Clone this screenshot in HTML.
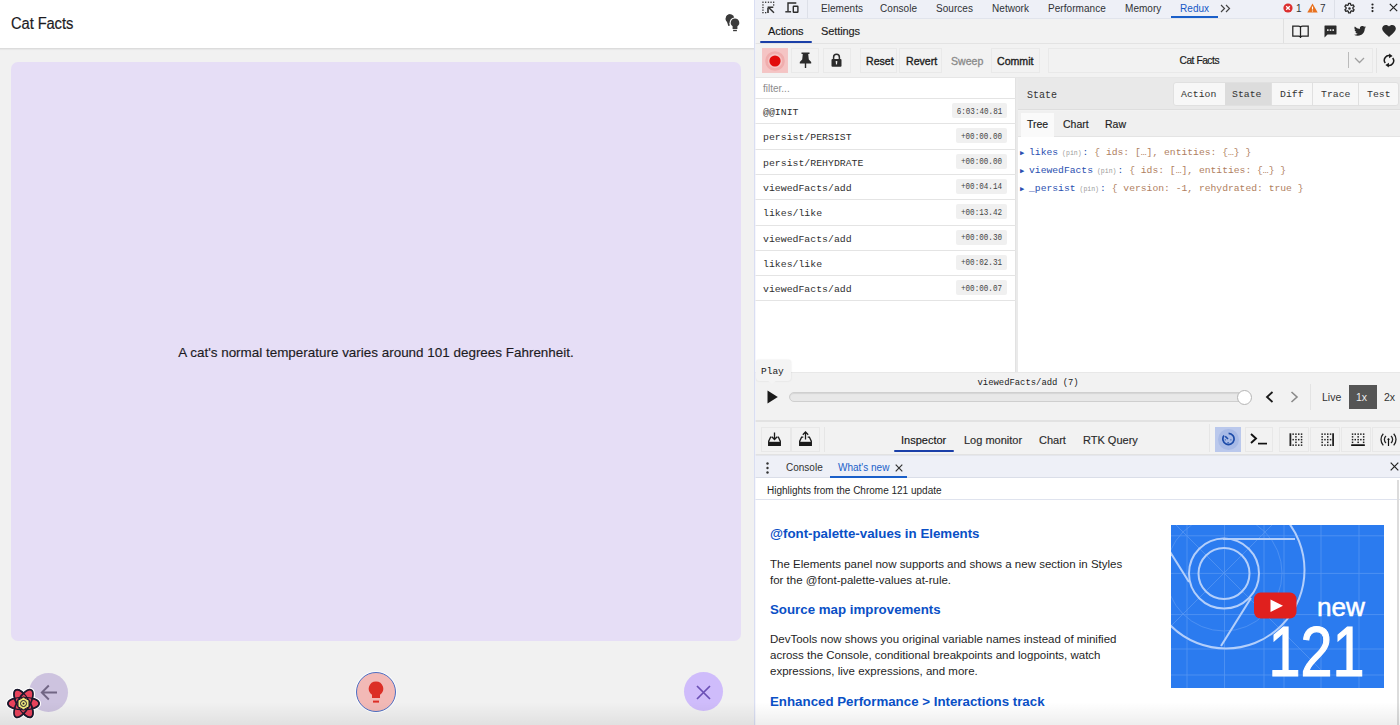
<!DOCTYPE html>
<html><head><meta charset="utf-8">
<style>
*{margin:0;padding:0;box-sizing:border-box}
html,body{width:1400px;height:725px;overflow:hidden;background:#fff;font-family:"Liberation Sans",sans-serif;color:#202124}
.a{position:absolute}
.mono{font-family:"Liberation Mono",monospace}
/* app */
#app{left:0;top:0;width:754px;height:725px;background:#f1f1f1}
#hdr{left:0;top:0;width:754px;height:49px;background:#fff;border-bottom:1px solid #dcdcdc;box-shadow:0 1px 1px rgba(0,0,0,.04)}
#card{left:11px;top:62px;width:730px;height:579px;background:#e6def6;border-radius:7px}
/* devtools */
#dt{left:755px;top:0;width:645px;height:725px;background:#fff}
.txt{white-space:nowrap;line-height:1}
.tb{top:3.8px;font-size:10px;color:#303236;letter-spacing:0.05px}
.btn{top:48px;height:25px;border:1px solid #e9e9e9;background:#f2f2f2}
.bt{top:56px;font-size:10.6px;color:#1e1e1e;-webkit-text-stroke:0.35px #1e1e1e;letter-spacing:0px}
.an{font-size:9.85px;color:#303030}
.tbadge{height:15px;background:#f0f0f0;border-radius:2px}
.tm{font-size:7.6px;color:#444;text-align:center;transform:scaleY(1.3);transform-origin:50% 30%}
.st{top:90px;font-size:9.8px;color:#333}
.tt{top:119px;font-size:10.5px;color:#222;-webkit-text-stroke:0.15px #222}
.tree{white-space:nowrap;font-size:9.7px;line-height:12px}
.tree .ar{font-size:7px;color:#2a4fb0;display:inline-block;width:9px;vertical-align:0px}
.tree .k{color:#2a4fb0}
.tree .pin{font-size:6.5px;color:#999;margin:0 1px 0 4px}
.tree .v{color:#b08060}
.btn2{top:427px;height:25px;border:1px solid #e8e8e8;background:#f2f2f2}
.it{top:434.5px;font-size:11px;color:#2a2a2a;-webkit-text-stroke:0.15px #2a2a2a}
.dr{top:463px;font-size:10px;color:#333}
.h2{font-size:13.3px;font-weight:bold;color:#0a50c6}
.p{font-size:11.5px;line-height:16.2px;color:#1f1f1f;white-space:nowrap}
.rs{font-size:11px;letter-spacing:-0.1px;-webkit-text-stroke:0.15px #222}
</style></head><body>
<div id="app" class="a">
  <div id="hdr" class="a">
    <div class="a txt" style="left:11px;top:16px;font-size:16px;letter-spacing:-0.1px;color:#1c1b1f;-webkit-text-stroke:0.2px #1c1b1f;transform:scaleX(0.92);transform-origin:0 0">Cat Facts</div>
  </div>
  <div id="card" class="a">
    <div class="a txt" style="left:0;width:730px;top:283.5px;text-align:center;font-size:13.45px;color:#1c1b1f;-webkit-text-stroke:0.15px #1c1b1f">A cat's normal temperature varies around 101 degrees Fahrenheit.</div>
  </div>
  <!-- buttons -->
  <div class="a" style="left:29px;top:673px;width:39px;height:39px;border-radius:50%;background:#cdc3df"></div>
  <svg class="a" style="left:39.5px;top:684px" width="18" height="17" viewBox="0 0 18 17"><path d="M17 8.5H2.2M8.8 1.5L1.8 8.5l7 7" stroke="#716684" stroke-width="1.9" fill="none"/></svg>
  <div class="a" style="left:356px;top:672px;width:40px;height:40px;border-radius:50%;background:#f2b9b6;border:1.6px solid #4d6ec2;box-shadow:0 0 0 1px rgba(255,255,255,.7)"></div>
  <svg class="a" style="left:368px;top:681px" width="16" height="23" viewBox="0 0 16 23"><path d="M8 0.5a7.2 7.2 0 0 0-4 13.2v3.3h8v-3.3A7.2 7.2 0 0 0 8 0.5z" fill="#dc2e26"/><rect x="5" y="19.6" width="6" height="2" fill="#dc2e26"/></svg>
  <div class="a" style="left:684px;top:672px;width:39px;height:39px;border-radius:50%;background:#cfbcfb"></div>
  <svg class="a" style="left:696px;top:685px" width="15" height="15" viewBox="0 0 15 15"><path d="M1 1l13 13M14 1L1 14" stroke="#6a4fb5" stroke-width="1.7"/></svg>
  <!-- header icon -->
  <svg class="a" style="left:724px;top:13px" width="18" height="20" viewBox="0 0 18 20">
    <path d="M6 1.3a4.3 4.3 0 0 0-3 7.4l1.3 4.3 1.6-.4-.6-3.8A4.3 4.3 0 0 0 6 1.3z" fill="#3a3a3a"/>
    <circle cx="6" cy="5.6" r="4.3" fill="#3a3a3a"/>
    <g stroke="#fff" stroke-width="2.2" fill="#3a3a3a" stroke-linejoin="round">
      <path d="M11 5.6a4.2 4.2 0 0 0-2.4 7.7v2.8h4.8v-2.8A4.2 4.2 0 0 0 11 5.6z"/>
    </g>
    <path d="M11 5.6a4.2 4.2 0 0 0-2.4 7.7v2.8h4.8v-2.8A4.2 4.2 0 0 0 11 5.6z" fill="#3a3a3a"/>
    <rect x="9.1" y="16.8" width="3.8" height="1.4" fill="#3a3a3a"/>
  </svg>
  <!-- react logo -->
  <svg class="a" style="left:5px;top:686px" width="37" height="35" viewBox="0 0 37 35">
    <g transform="translate(18.5 17.5)">
      <g stroke="#fff" stroke-width="4" fill="#fff"><ellipse rx="15.6" ry="6.3"/><ellipse rx="15.6" ry="6.3" transform="rotate(60)"/><ellipse rx="15.6" ry="6.3" transform="rotate(120)"/></g>
      <g stroke="#1c1a2e" stroke-width="1.7" fill="#e8435b"><ellipse rx="15.6" ry="6.3"/><ellipse rx="15.6" ry="6.3" transform="rotate(60)"/><ellipse rx="15.6" ry="6.3" transform="rotate(120)"/></g>
      <g stroke="#1c1a2e" stroke-width="1.1" fill="none"><ellipse rx="15.6" ry="6.3"/><ellipse rx="15.6" ry="6.3" transform="rotate(60)"/></g>
      <path d="M0-6.3L5.5-3.15V3.15L0 6.3-5.5 3.15V-3.15z" fill="#efe97c" stroke="#1c1a2e" stroke-width="1"/>
      <circle r="3" fill="#efe97c" stroke="#1c1a2e" stroke-width="1"/><circle r="1" fill="#1c1a2e"/>
    </g>
  </svg>
</div>
<div id="dt" class="a">
  <!-- top tab bar -->
  <div class="a" style="left:0;top:0;width:646px;height:19px;background:#eef0f7;border-bottom:1px solid #e1e4ec"></div>
  <svg class="a" style="left:6.5px;top:1px" width="13" height="13" viewBox="0 0 13 13">
    <g fill="#333"><rect x="0.3" y="0.6" width="1.3" height="1.3"/><rect x="3" y="0.6" width="1.3" height="1.3"/><rect x="5.8" y="0.6" width="1.3" height="1.3"/><rect x="8.4" y="0.6" width="1.3" height="1.3"/><rect x="11" y="0.6" width="1.3" height="1.3"/><rect x="0.3" y="3.3" width="1.3" height="1.3"/><rect x="0.3" y="5.9" width="1.3" height="1.3"/><rect x="0.3" y="8.5" width="1.3" height="1.3"/><rect x="0.3" y="11" width="1.3" height="1.3"/><rect x="3" y="11" width="1.3" height="1.3"/><rect x="11" y="3.3" width="1.3" height="1.3"/></g>
    <path d="M6.3 6.3L12 11.8" stroke="#333" stroke-width="1.5"/><path d="M6 6.9V12M5.6 6.3H11.3" stroke="#333" stroke-width="1.6"/>
  </svg>
  <svg class="a" style="left:29.5px;top:2px" width="14" height="11" viewBox="0 0 14 11"><path d="M3 9.3V1h8.3" stroke="#2b2b2b" stroke-width="1.4" fill="none"/><path d="M0.3 9.8h5.8" stroke="#2b2b2b" stroke-width="1.4"/><rect x="8.3" y="4.3" width="4.6" height="6" rx="0.5" stroke="#2b2b2b" stroke-width="1.4" fill="none"/></svg>
  <div class="a" style="left:52px;top:0;width:1px;height:18px;background:#dde0e8"></div>
  <div class="a txt tb" style="left:66px">Elements</div>
  <div class="a txt tb" style="left:125px">Console</div>
  <div class="a txt tb" style="left:181px">Sources</div>
  <div class="a txt tb" style="left:237px">Network</div>
  <div class="a txt tb" style="left:293px">Performance</div>
  <div class="a txt tb" style="left:370px">Memory</div>
  <div class="a txt tb" style="left:425px;color:#1658c6">Redux</div>
  <div class="a" style="left:416px;top:16px;width:47px;height:2px;background:#1a5fc9"></div>
  <svg class="a" style="left:465px;top:4px" width="11" height="9" viewBox="0 0 11 9"><path d="M1 1l3.5 3.5L1 8M6 1l3.5 3.5L6 8" stroke="#444" stroke-width="1.2" fill="none"/></svg>
  <svg class="a" style="left:528px;top:3px" width="10" height="10" viewBox="0 0 10 10"><circle cx="5" cy="5" r="4.6" fill="#dc2f2f"/><path d="M3.2 3.2l3.6 3.6M6.8 3.2l-3.6 3.6" stroke="#fff" stroke-width="1.3"/></svg>
  <div class="a txt tb" style="left:541px;top:4px;font-size:10px">1</div>
  <svg class="a" style="left:552px;top:3px" width="11" height="10" viewBox="0 0 11 10"><path d="M5.5 0.5L10.7 9.5H0.3z" fill="#e8711f"/><path d="M5.5 3.5v3M5.5 7.5v1" stroke="#fff" stroke-width="1.1"/></svg>
  <div class="a txt tb" style="left:565px;top:4px;font-size:10px">7</div>
  <div class="a" style="left:579px;top:0;width:1px;height:18px;background:#dde0e8"></div>
  <svg class="a" style="left:587.5px;top:1.5px" width="13" height="13" viewBox="0 0 24 24"><path fill="none" stroke="#2b2b2b" stroke-width="2.4" stroke-linejoin="round" d="M10.3 2.5h3.4l.5 2.8 1.9 1.1 2.7-1 1.7 2.9-2.2 1.9v2.2l2.2 1.9-1.7 2.9-2.7-1-1.9 1.1-.5 2.8h-3.4l-.5-2.8-1.9-1.1-2.7 1-1.7-2.9 2.2-1.9v-2.2L3.5 8.3l1.7-2.9 2.7 1 1.9-1.1z"/><circle cx="12" cy="12" r="2.3" fill="#2b2b2b"/></svg>
  <svg class="a" style="left:615.5px;top:3px" width="3" height="10" viewBox="0 0 3 10"><circle cx="1.5" cy="1.5" r="1.1" fill="#222"/><circle cx="1.5" cy="4.8" r="1.1" fill="#222"/><circle cx="1.5" cy="8.1" r="1.1" fill="#222"/></svg>
  <svg class="a" style="left:634px;top:3px" width="9" height="9" viewBox="0 0 9 9"><path d="M0.8 0.8l7.4 7.4M8.2 0.8l-7.4 7.4" stroke="#222" stroke-width="1.2"/></svg>

  <!-- redux panel bg -->
  <div class="a" style="left:0;top:19px;width:646px;height:437px;background:#f2f2f2"></div>
  <!-- actions/settings row -->
  <div class="a" style="left:0;top:43px;width:646px;height:1px;background:#e3e3e3"></div>
  <div class="a txt rs" style="left:13px;top:26px;color:#111">Actions</div>
  <div class="a txt rs" style="left:66px;top:26px;color:#222">Settings</div>
  <div class="a" style="left:5px;top:41px;width:52px;height:2px;background:#1a3fa8;border-radius:1px"></div>
  <div class="a" style="left:528px;top:19px;width:1px;height:24px;background:#e0e0e0"></div>

  <!-- toolbar -->
  <div class="a" style="left:0;top:77px;width:646px;height:1px;background:#e6e6e6"></div>
  <div class="a btn" style="left:7px;width:26px;background:#f5c4c4;border-color:#f3c6c6"></div>
  <svg class="a" style="left:9px;top:50px" width="22" height="22" viewBox="0 0 22 22"><circle cx="11" cy="11" r="9.8" fill="#f0adad"/><circle cx="11" cy="11" r="7.2" fill="#f5c4c4"/><circle cx="11" cy="11" r="5.6" fill="#e20b0b"/></svg>
  <div class="a btn" style="left:36px;width:28px"></div>
  <svg class="a" style="left:44px;top:52px" width="13" height="16" viewBox="0 0 13 16"><path d="M2.5 0.5h8v1.6H9.2l0.6 5.4 2.4 2.4v1.5H7.2v5.1h-1.4v-5.1H0.8V9.9l2.4-2.4 0.6-5.4H2.5z" fill="#2b2b2b"/></svg>
  <div class="a btn" style="left:68px;width:28px"></div>
  <svg class="a" style="left:76px;top:53px" width="11" height="14" viewBox="0 0 11 14"><path d="M2.6 6V4.2a2.9 2.9 0 0 1 5.8 0V6" stroke="#2b2b2b" stroke-width="1.5" fill="none"/><rect x="0.5" y="6" width="10" height="7.8" rx="1" fill="#2b2b2b"/><path d="M5.5 8.6v2.8" stroke="#f2f2f2" stroke-width="1.2"/><circle cx="5.5" cy="8.8" r="0.9" fill="#f2f2f2"/></svg>
  <div class="a btn" style="left:105px;width:37px"></div>
  <div class="a btn" style="left:144px;width:43px"></div>
  <div class="a btn" style="left:236px;width:49px"></div>
  <div class="a txt bt" style="left:111px">Reset</div>
  <div class="a txt bt" style="left:151px">Revert</div>
  <div class="a txt bt" style="left:196px;color:#8a8a8a;-webkit-text-stroke:0.3px #8a8a8a">Sweep</div>
  <div class="a txt bt" style="left:242px">Commit</div>
  <!-- instance select -->
  <div class="a btn" style="left:293px;width:325px"></div>
  <div class="a txt bt" style="left:424.5px;font-size:10.2px;letter-spacing:-0.45px;color:#1a1a1a;-webkit-text-stroke:0.2px #1a1a1a">Cat Facts</div>
  <div class="a" style="left:593px;top:52px;width:1px;height:16px;background:#bbb"></div>
  <svg class="a" style="left:599px;top:57px" width="11" height="7" viewBox="0 0 11 7"><path d="M1 1l4.5 4.5L10 1" stroke="#a0a0a0" stroke-width="1.3" fill="none"/></svg>
  <div class="a" style="left:621px;top:48px;width:1px;height:25px;background:#e3e3e3"></div>
  <svg class="a" style="left:627.5px;top:53px" width="12" height="15" viewBox="0 0 12 15"><path d="M2.3 10A4.6 4.6 0 0 1 7.6 2.9" stroke="#1a1a1a" stroke-width="1.5" fill="none"/><path d="M9.7 5A4.6 4.6 0 0 1 4.4 12.1" stroke="#1a1a1a" stroke-width="1.5" fill="none"/><path d="M6.2 0.5L9.6 3 6 5.2z" fill="#1a1a1a"/><path d="M5.8 14.5L2.4 12 6 9.8z" fill="#1a1a1a"/></svg>
  <!-- right icons row -->
  <svg class="a" style="left:537px;top:24.5px" width="17" height="13" viewBox="0 0 17 13"><path d="M0.8 1h5.6c1 0 2.1.6 2.1 1.6V12c-.3-.5-1-.9-2-.9H0.8zM16.2 1h-5.6c-1 0-2.1.6-2.1 1.6V12c.3-.5 1-.9 2-.9h5.7z" stroke="#222" stroke-width="1.25" fill="none"/></svg>
  <svg class="a" style="left:569px;top:25px" width="13" height="13" viewBox="0 0 13 13"><path d="M1 0.5h11c.3 0 .5.2.5.5v8c0 .3-.2.5-.5.5H3.5L0.5 12.5V1c0-.3.2-.5.5-.5z" fill="#2b2b2b"/><rect x="3" y="4.3" width="1.6" height="1.6" fill="#f2f2f2"/><rect x="5.7" y="4.3" width="1.6" height="1.6" fill="#f2f2f2"/><rect x="8.4" y="4.3" width="1.6" height="1.6" fill="#f2f2f2"/></svg>
  <svg class="a" style="left:599px;top:26px" width="12" height="10" viewBox="0 0 24 20"><path fill="#2b2b2b" d="M24 2.4a9.8 9.8 0 0 1-2.8.8A4.9 4.9 0 0 0 23.3.4a9.9 9.9 0 0 1-3.1 1.2A4.9 4.9 0 0 0 11.8 6 14 14 0 0 1 1.7.9a4.9 4.9 0 0 0 1.5 6.6A4.9 4.9 0 0 1 1 6.9v.1a4.9 4.9 0 0 0 3.9 4.8 4.9 4.9 0 0 1-2.2.1 4.9 4.9 0 0 0 4.6 3.4A9.9 9.9 0 0 1 0 17.3 14 14 0 0 0 7.5 19.5c9.1 0 14-7.5 14-14v-.6A10 10 0 0 0 24 2.4z"/></svg>
  <svg class="a" style="left:627px;top:25px" width="14" height="12" viewBox="0 0 24 21"><path fill="#2b2b2b" d="M12 21l-1.7-1.6C4.2 13.9 0 10.1 0 6.5 0 2.9 2.9 0 6.5 0 8.6 0 10.6 1 12 2.5 13.4 1 15.4 0 17.5 0 21.1 0 24 2.9 24 6.5c0 3.6-4.2 7.4-10.3 12.9z"/></svg>

  <!-- action list -->
  <div class="a" style="left:0;top:78px;width:261px;height:294px;background:#fff;border-right:1px solid #e2e2e2"></div>
  <div class="a" style="left:261px;top:78px;width:2px;height:294px;background:#eaeaea"></div>
  <div class="a txt" style="left:8px;top:84px;font-size:10px;color:#8c8c8c">filter...</div>
  <div class="a" style="left:0;top:98.0px;width:261px;height:1px;background:#e4e4e4"></div>
  <div class="a txt mono an" style="left:8px;top:108.0px">@@INIT</div>
  <div class="a tbadge" style="left:197px;top:103.0px;width:55px"></div>
  <div class="a txt mono tm" style="left:197px;width:55px;top:107.5px">6:03:40.81</div>
  <div class="a" style="left:0;top:123.3px;width:261px;height:1px;background:#e4e4e4"></div>
  <div class="a txt mono an" style="left:8px;top:133.3px">persist/PERSIST</div>
  <div class="a tbadge" style="left:201px;top:128.3px;width:51px"></div>
  <div class="a txt mono tm" style="left:201px;width:51px;top:132.8px">+00:00.00</div>
  <div class="a" style="left:0;top:148.6px;width:261px;height:1px;background:#e4e4e4"></div>
  <div class="a txt mono an" style="left:8px;top:158.6px">persist/REHYDRATE</div>
  <div class="a tbadge" style="left:201px;top:153.6px;width:51px"></div>
  <div class="a txt mono tm" style="left:201px;width:51px;top:158.1px">+00:00.00</div>
  <div class="a" style="left:0;top:173.9px;width:261px;height:1px;background:#e4e4e4"></div>
  <div class="a txt mono an" style="left:8px;top:183.9px">viewedFacts/add</div>
  <div class="a tbadge" style="left:201px;top:178.9px;width:51px"></div>
  <div class="a txt mono tm" style="left:201px;width:51px;top:183.4px">+00:04.14</div>
  <div class="a" style="left:0;top:199.2px;width:261px;height:1px;background:#e4e4e4"></div>
  <div class="a txt mono an" style="left:8px;top:209.2px">likes/like</div>
  <div class="a tbadge" style="left:201px;top:204.2px;width:51px"></div>
  <div class="a txt mono tm" style="left:201px;width:51px;top:208.7px">+00:13.42</div>
  <div class="a" style="left:0;top:224.5px;width:261px;height:1px;background:#e4e4e4"></div>
  <div class="a txt mono an" style="left:8px;top:234.5px">viewedFacts/add</div>
  <div class="a tbadge" style="left:201px;top:229.5px;width:51px"></div>
  <div class="a txt mono tm" style="left:201px;width:51px;top:234.0px">+00:00.30</div>
  <div class="a" style="left:0;top:249.8px;width:261px;height:1px;background:#e4e4e4"></div>
  <div class="a txt mono an" style="left:8px;top:259.8px">likes/like</div>
  <div class="a tbadge" style="left:201px;top:254.8px;width:51px"></div>
  <div class="a txt mono tm" style="left:201px;width:51px;top:259.3px">+00:02.31</div>
  <div class="a" style="left:0;top:275.1px;width:261px;height:1px;background:#e4e4e4"></div>
  <div class="a txt mono an" style="left:8px;top:285.1px">viewedFacts/add</div>
  <div class="a tbadge" style="left:201px;top:280.1px;width:51px"></div>
  <div class="a txt mono tm" style="left:201px;width:51px;top:284.6px">+00:00.07</div>
  <div class="a" style="left:0;top:300.4px;width:261px;height:1px;background:#e4e4e4"></div>

  <!-- state panel -->
  <div class="a" style="left:263px;top:78px;width:383px;height:32px;background:#e9e9e9;border-bottom:1px solid #dedede"></div>
  <div class="a txt mono" style="left:272px;top:90.5px;font-size:10px;color:#333">State</div>
  <div class="a" style="left:418px;top:81.5px;width:226px;height:24.5px;background:#f7f7f7;border:1px solid #e0e0e0;border-radius:3px"></div>
  <div class="a" style="left:470px;top:82.5px;width:46px;height:22.5px;background:#dcdcdc"></div>
  <div class="a" style="left:516px;top:82.5px;width:1px;height:22.5px;background:#e0e0e0"></div>
  <div class="a" style="left:557px;top:82.5px;width:1px;height:22.5px;background:#e0e0e0"></div>
  <div class="a" style="left:603px;top:82.5px;width:1px;height:22.5px;background:#e0e0e0"></div>
  <div class="a txt mono st" style="left:426px">Action</div>
  <div class="a txt mono st" style="left:477px">State</div>
  <div class="a txt mono st" style="left:525px">Diff</div>
  <div class="a txt mono st" style="left:566px">Trace</div>
  <div class="a txt mono st" style="left:612px">Test</div>
  <div class="a" style="left:263px;top:111px;width:383px;height:26px;background:#f0f0f0;border-bottom:1px solid #e4e4e4"></div>
  <div class="a" style="left:266px;top:113px;width:33px;height:24px;background:#fafafa"></div>
  <div class="a txt tt" style="left:272px">Tree</div>
  <div class="a txt tt" style="left:308px">Chart</div>
  <div class="a txt tt" style="left:350px">Raw</div>
  <div class="a" style="left:263px;top:137px;width:383px;height:235px;background:#fff"></div>
  <div class="a tree mono" style="left:265px;top:147px"><span class="ar">&#9654;</span><span class="k">likes</span><span class="pin">(pin)</span><span class="k">:</span> <span class="v">{ ids: [&hellip;], entities: {&hellip;} }</span></div>
  <div class="a tree mono" style="left:265px;top:165px"><span class="ar">&#9654;</span><span class="k">viewedFacts</span><span class="pin">(pin)</span><span class="k">:</span> <span class="v">{ ids: [&hellip;], entities: {&hellip;} }</span></div>
  <div class="a tree mono" style="left:265px;top:183px"><span class="ar">&#9654;</span><span class="k">_persist</span><span class="pin">(pin)</span><span class="k">:</span> <span class="v">{ version: -1, rehydrated: true }</span></div>

  <!-- slider section -->
  <div class="a" style="left:0;top:372px;width:646px;height:49px;background:#f2f2f2;border-top:1px solid #e8e8e8"></div>
  <div class="a" style="left:0;top:420px;width:646px;height:2px;background:#e2e2e2"></div>
  <div class="a txt mono" style="left:222.5px;top:379px;font-size:8.9px;color:#222">viewedFacts/add (7)</div>
  <svg class="a" style="left:12px;top:390px" width="11" height="14" viewBox="0 0 11 14"><path d="M0.5 0.5L10.8 7 0.5 13.5z" fill="#1a1a1a"/></svg>
  <div class="a" style="left:34px;top:392px;width:456px;height:10px;background:#e8e8e8;border:1px solid #cfcfcf;border-radius:5px;box-shadow:inset 0 1px 1px rgba(0,0,0,.08)"></div>
  <div class="a" style="left:482px;top:390px;width:15px;height:15px;background:#fff;border:1px solid #b5b5b5;border-radius:50%"></div>
  <svg class="a" style="left:510px;top:391px" width="9" height="12" viewBox="0 0 9 12"><path d="M7.5 1L2 6l5.5 5" stroke="#1a1a1a" stroke-width="1.8" fill="none"/></svg>
  <svg class="a" style="left:535px;top:391px" width="9" height="12" viewBox="0 0 9 12"><path d="M1.5 1L7 6l-5.5 5" stroke="#8a8a8a" stroke-width="1.6" fill="none"/></svg>
  <div class="a" style="left:555px;top:384px;width:1px;height:26px;background:#e3e3e3"></div>
  <div class="a txt" style="left:567px;top:392px;font-size:10.5px;color:#333">Live</div>
  <div class="a" style="left:594px;top:385px;width:28px;height:24px;background:#555"></div>
  <div class="a txt" style="left:601px;top:392px;font-size:10.5px;color:#eee">1x</div>
  <div class="a txt" style="left:629px;top:392px;font-size:10.5px;color:#333">2x</div>
  <!-- tooltip -->
  <div class="a" style="left:1px;top:360px;width:35px;height:21px;background:#f4f4f4;border-radius:3px;box-shadow:0 0 2px rgba(0,0,0,.12)"></div>
  <div class="a" style="left:12px;top:380px;width:0;height:0;border-left:5px solid transparent;border-right:5px solid transparent;border-top:4px solid #f4f4f4"></div>
  <div class="a txt mono" style="left:6px;top:367px;font-size:9.5px;color:#222">Play</div>

  <!-- bottom toolbar -->
  <div class="a" style="left:0;top:422px;width:646px;height:32px;background:#f2f2f2"></div>
  <div class="a" style="left:0;top:454px;width:646px;height:1px;background:#e2e2e2"></div>
  <div class="a btn2" style="left:6px;width:30px"></div>
  <div class="a btn2" style="left:36px;width:29px"></div>
  <div class="a" style="left:69px;top:427px;width:1px;height:25px;background:#e6e6e6"></div>
  <svg class="a" style="left:13px;top:432px" width="13" height="14" viewBox="0 0 13 14"><path d="M6.5 0.5v7M3.8 4.8L6.5 7.5 9.2 4.8" stroke="#1a1a1a" stroke-width="1.3" fill="none"/><path d="M3.5 5.2H2.6L0.7 9.2V13.3h11.6V9.2L10.4 5.2H9.5" stroke="#1a1a1a" stroke-width="1.3" fill="none"/><rect x="0.7" y="9.8" width="11.6" height="3.5" fill="#1a1a1a"/></svg>
  <svg class="a" style="left:44px;top:431px" width="13" height="15" viewBox="0 0 13 15"><path d="M6.5 8.5v-7.5M3.8 3.7L6.5 1 9.2 3.7" stroke="#1a1a1a" stroke-width="1.3" fill="none"/><path d="M4.3 6.2H2.6L0.7 10.2V14.3h11.6V10.2L10.4 6.2H8.7" stroke="#1a1a1a" stroke-width="1.3" fill="none"/><rect x="0.7" y="10.8" width="11.6" height="3.5" fill="#1a1a1a"/></svg>
  <div class="a txt it" style="left:146px;color:#111">Inspector</div>
  <div class="a txt it" style="left:209px">Log monitor</div>
  <div class="a txt it" style="left:284px">Chart</div>
  <div class="a txt it" style="left:328px">RTK Query</div>
  <div class="a" style="left:139px;top:450px;width:60px;height:2px;background:#1a3fa8;border-radius:1px"></div>
  <div class="a" style="left:454px;top:424px;width:1px;height:28px;background:#e6e6e6"></div>
  <div class="a" style="left:460px;top:426.5px;width:26px;height:25px;background:#bac8ec"></div>
  <div class="a" style="left:462.5px;top:428.5px;width:21px;height:21px;background:#a8bae6;border-radius:50%"></div>
  <svg class="a" style="left:465.5px;top:431.5px" width="14" height="14" viewBox="0 0 14 14"><path d="M7.6 1.4A5.6 5.6 0 1 1 3 3.6" stroke="#1b4aa8" stroke-width="1.7" fill="none"/><path d="M4.2 4.2L7 7" stroke="#1b4aa8" stroke-width="1.6"/><circle cx="4.3" cy="7.8" r="0.6" fill="#1b4aa8"/><circle cx="9.9" cy="7.8" r="0.6" fill="#1b4aa8"/><circle cx="7.1" cy="10.7" r="0.7" fill="#1b4aa8"/></svg>
  <div class="a btn2" style="left:490px;width:28px"></div>
  <svg class="a" style="left:495px;top:433px" width="18" height="12" viewBox="0 0 18 12"><path d="M1 1l5 4.5L1 10" stroke="#111" stroke-width="1.9" fill="none"/><path d="M8 10.6h9" stroke="#111" stroke-width="1.7"/></svg>
  <div class="a btn2" style="left:524px;width:30px"></div>
  <div class="a btn2" style="left:555px;width:30px"></div>
  <div class="a btn2" style="left:586px;width:30px"></div>
  <div class="a btn2" style="left:617px;width:29px"></div>
  <svg class="a" style="left:533.5px;top:432.5px" width="14" height="14" viewBox="0 0 14 14"><path d="M1.4 0.3v12.7" stroke="#222" stroke-width="1.8"/><g fill="#222"><rect x="3.4" y="0.4" width="1.5" height="1.5"/><rect x="6.2" y="0.4" width="1.5" height="1.5"/><rect x="9.0" y="0.4" width="1.5" height="1.5"/><rect x="11.8" y="0.4" width="1.5" height="1.5"/><rect x="3.4" y="5.9" width="1.5" height="1.5"/><rect x="6.2" y="5.9" width="1.5" height="1.5"/><rect x="9.0" y="5.9" width="1.5" height="1.5"/><rect x="11.8" y="5.9" width="1.5" height="1.5"/><rect x="3.4" y="11.4" width="1.5" height="1.5"/><rect x="6.2" y="11.4" width="1.5" height="1.5"/><rect x="9.0" y="11.4" width="1.5" height="1.5"/><rect x="11.8" y="11.4" width="1.5" height="1.5"/><rect x="6.2" y="3.1" width="1.5" height="1.5"/><rect x="11.8" y="3.1" width="1.5" height="1.5"/><rect x="6.2" y="8.6" width="1.5" height="1.5"/><rect x="11.8" y="8.6" width="1.5" height="1.5"/></g></svg>
  <svg class="a" style="left:565.5px;top:432.5px" width="14" height="14" viewBox="0 0 14 14"><path d="M12.1 0.3v12.7" stroke="#222" stroke-width="1.8"/><g fill="#222"><rect x="0.4" y="0.4" width="1.5" height="1.5"/><rect x="3.2" y="0.4" width="1.5" height="1.5"/><rect x="6.0" y="0.4" width="1.5" height="1.5"/><rect x="8.8" y="0.4" width="1.5" height="1.5"/><rect x="0.4" y="5.9" width="1.5" height="1.5"/><rect x="3.2" y="5.9" width="1.5" height="1.5"/><rect x="6.0" y="5.9" width="1.5" height="1.5"/><rect x="8.8" y="5.9" width="1.5" height="1.5"/><rect x="0.4" y="11.4" width="1.5" height="1.5"/><rect x="3.2" y="11.4" width="1.5" height="1.5"/><rect x="6.0" y="11.4" width="1.5" height="1.5"/><rect x="8.8" y="11.4" width="1.5" height="1.5"/><rect x="0.4" y="3.1" width="1.5" height="1.5"/><rect x="6.0" y="3.1" width="1.5" height="1.5"/><rect x="0.4" y="8.6" width="1.5" height="1.5"/><rect x="6.0" y="8.6" width="1.5" height="1.5"/></g></svg>
  <svg class="a" style="left:595.5px;top:432.5px" width="14" height="14" viewBox="0 0 14 14"><path d="M0.7 12.1h12.6" stroke="#111" stroke-width="1.6" stroke-linecap="round"/><g fill="#222"><rect x="0.8" y="0.4" width="1.5" height="1.5"/><rect x="3.5" y="0.4" width="1.5" height="1.5"/><rect x="6.4" y="0.4" width="1.5" height="1.5"/><rect x="9.1" y="0.4" width="1.5" height="1.5"/><rect x="11.9" y="0.4" width="1.5" height="1.5"/><rect x="0.8" y="5.9" width="1.5" height="1.5"/><rect x="3.5" y="5.9" width="1.5" height="1.5"/><rect x="6.4" y="5.9" width="1.5" height="1.5"/><rect x="9.1" y="5.9" width="1.5" height="1.5"/><rect x="11.9" y="5.9" width="1.5" height="1.5"/><rect x="0.8" y="3.1" width="1.5" height="1.5"/><rect x="6.4" y="3.1" width="1.5" height="1.5"/><rect x="11.9" y="3.1" width="1.5" height="1.5"/><rect x="0.8" y="8.6" width="1.5" height="1.5"/><rect x="6.4" y="8.6" width="1.5" height="1.5"/><rect x="11.9" y="8.6" width="1.5" height="1.5"/></g></svg>
  <svg class="a" style="left:625px;top:432.5px" width="17" height="14" viewBox="0 0 17 14"><path d="M3.3 0.8a8.5 8.5 0 0 0 0 11.6M13.7 0.8a8.5 8.5 0 0 1 0 11.6M6 3a4.6 4.6 0 0 0 0 7M11 3a4.6 4.6 0 0 1 0 7" stroke="#222" stroke-width="1.3" fill="none"/><path d="M8.5 4.9l1.3 1.3-1.3 1.3-1.3-1.3z" fill="#111"/><path d="M8.5 6V13" stroke="#111" stroke-width="1.2"/></svg>

  <!-- drawer -->
  <div class="a" style="left:0;top:455px;width:646px;height:1px;background:#e4e6ec"></div>
  <div class="a" style="left:0;top:456px;width:646px;height:22px;background:#eef0f7;border-bottom:1px solid #dadee8"></div>
  <svg class="a" style="left:11px;top:462px" width="3" height="12" viewBox="0 0 3 12"><circle cx="1.5" cy="1.5" r="1.2" fill="#333"/><circle cx="1.5" cy="6" r="1.2" fill="#333"/><circle cx="1.5" cy="10.5" r="1.2" fill="#333"/></svg>
  <div class="a txt dr" style="left:31px">Console</div>
  <div class="a txt dr" style="left:83px;color:#1a5fc9">What's new</div>
  <svg class="a" style="left:140px;top:463.5px" width="8" height="8" viewBox="0 0 8 8"><path d="M0.7 0.7l6.6 6.6M7.3 0.7l-6.6 6.6" stroke="#333" stroke-width="1.2"/></svg>
  <div class="a" style="left:75px;top:476px;width:77px;height:2px;background:#1a5fc9"></div>
  <svg class="a" style="left:635px;top:462px" width="9" height="9" viewBox="0 0 9 9"><path d="M0.7 0.7l7.6 7.6M8.3 0.7l-7.6 7.6" stroke="#222" stroke-width="1.2"/></svg>
  <div class="a" style="left:0;top:478px;width:646px;height:22px;background:#fff;border-bottom:1px solid #dfe3ee"></div>
  <div class="a txt" style="left:12px;top:485.5px;font-size:10px;color:#1f1f1f">Highlights from the Chrome 121 update</div>
  <div class="a" style="left:0;top:502px;width:646px;height:223px;background:#fff"></div>
  <div class="a" style="left:642px;top:480px;width:1.5px;height:245px;background:#dcdcdc"></div>
  <div class="a txt h2" style="left:15px;top:527px">@font-palette-values in Elements</div>
  <div class="a p" style="left:15px;top:556px">The Elements panel now supports and shows a new section in Styles<br>for the @font-palette-values at-rule.</div>
  <div class="a txt h2" style="left:15px;top:603px">Source map improvements</div>
  <div class="a p" style="left:15px;top:631px">DevTools now shows you original variable names instead of minified<br>across the Console, conditional breakpoints and logpoints, watch<br>expressions, live expressions, and more.</div>
  <div class="a txt h2" style="left:15px;top:695px">Enhanced Performance &gt; Interactions track</div>

  <!-- chrome image -->
  <svg class="a" style="left:416px;top:525px" width="213" height="163" viewBox="0 0 213 163">
    <defs><clipPath id="cp"><rect width="213" height="163"/></clipPath></defs>
    <rect width="213" height="163" fill="#2b7bef"/>
    <g clip-path="url(#cp)">
      <g stroke="#7fb0f8" stroke-width="0.8" opacity="0.5" fill="none">
        <path d="M16 0v163M53.5 0v163M93 0v163M113 0v163M150 0v163M188 0v163"/>
        <path d="M0 10.8h213M0 48.4h213M0 89.6h213M0 124h213M0 150h213"/>
        <path d="M5 0L150 145M0 101L101 0"/>
        <circle cx="53" cy="48" r="58"/>
      </g>
      <g stroke="#b3cffb" stroke-width="2" fill="none">
        <circle cx="55" cy="45" r="78.5"/>
        <circle cx="53" cy="48.5" r="25.5"/>
        <circle cx="53" cy="48.5" r="35"/>
        <path d="M52 14H124"/>
        <path d="M18 57L-16 3"/>
        <path d="M80 73L50 121"/>
      </g>
    </g>
    <rect x="83" y="67.5" width="42.5" height="26" rx="6.5" fill="#e0201e"/>
    <path d="M99.5 74.4v12.5l12.5-6.25z" fill="#fff"/>
    <text x="146" y="91" font-family="Liberation Sans" font-size="25" fill="#fff" stroke="#fff" stroke-width="0.5" textLength="48" lengthAdjust="spacingAndGlyphs">new</text>
    <text x="97.5" y="151" font-family="Liberation Sans" font-size="70" fill="#fff" stroke="#fff" stroke-width="1.2" textLength="96" lengthAdjust="spacingAndGlyphs">121</text>
  </svg>
</div>
<div class="a" style="left:754px;top:0;width:1px;height:725px;background:#d9def2"></div><div class="a" style="left:755px;top:0;width:1px;height:725px;background:#eef0fa;opacity:.6"></div>
<div class="a" style="left:0;top:702px;width:1400px;height:23px;background:linear-gradient(rgba(0,0,0,0),rgba(0,0,0,0.065))"></div>
</body></html>
